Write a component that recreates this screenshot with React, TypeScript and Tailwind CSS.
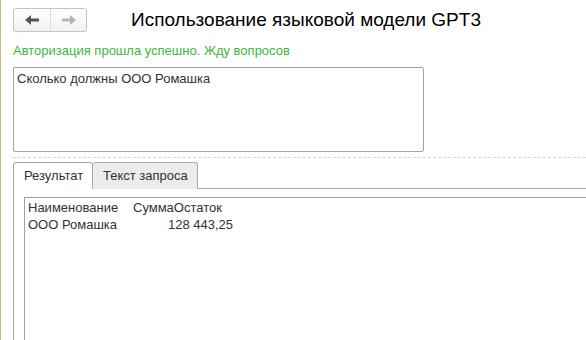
import React from 'react';

/* Arrow used in the back / forward pair */
function Arrow({ dir, color }: { dir: 'left' | 'right'; color: string }) {
  return (
    <svg width="14" height="10" viewBox="0 0 14 10" style={{ transform: dir === 'right' ? 'scaleX(-1)' : undefined }}>
      <path d="M0 5 L6 0 L6 3.5 L14 3.5 L14 6.5 L6 6.5 L6 10 Z" fill={color} />
    </svg>
  );
}

export default function App() {
  return (
    <div className="w-[586px] h-[340px] overflow-hidden bg-white border-l border-[#c8b97a] font-['Liberation_Sans',Arial,sans-serif] text-[#333]">
      <div className="pl-[12px]">
        {/* Header */}
        <div className="flex items-center pt-[8px]">
          <div className="flex h-[24px] w-[74px] rounded-[3px] border border-[#c4c4c4] bg-gradient-to-b from-white to-[#f1f1f1]">
            <div className="flex w-[37px] items-center justify-center border-r border-[#dcdcdc]">
              <Arrow dir="left" color="#555" />
            </div>
            <div className="flex flex-1 items-center justify-center">
              <Arrow dir="right" color="#b4b4b4" />
            </div>
          </div>
          <h1 className="ml-[44px] text-[19px] leading-[24px] text-black">Использование языковой модели GPT3</h1>
        </div>

        <p className="mt-[11px] text-[13px] leading-[16px] text-[#3cb83c]">Авторизация прошла успешно. Жду вопросов</p>

        {/* Query input */}
        <div className="mt-[8px] h-[85px] w-[411px] rounded-[2px] border border-[#a3a3a3] px-[3px] py-[3px] text-[13px] leading-[16px]">
          Сколько должны ООО Ромашка
        </div>

        <div className="mt-[5px] border-t border-dashed border-[#d6d6d6]" />

        {/* Tabs */}
        <div className="mt-[4px] flex h-[27px] items-end">
          <div className="flex h-[27px] w-[80px] items-center rounded-t-[3px] border border-b-0 border-[#a8a8a8] bg-white pl-[10px] text-[13px] text-[#333]">
            Результат
          </div>
          <div className="flex h-[27px] w-[105px] items-center rounded-t-[3px] border border-l-0 border-b-0 border-[#a8a8a8] bg-[#ebebeb] pl-[10px] text-[13px] text-[#333]">
            Текст запроса
          </div>
          <div className="h-[1px] flex-1 bg-[#a8a8a8]" />
        </div>

        {/* Result panel */}
        <div className="h-[200px] border-l border-[#a8a8a8] pl-[10px] pt-[8px]">
          <div className="h-[200px] border-l border-t border-[#a0a0a0] pl-[3px] pt-[1px] text-[13px] leading-[17px]">
            <div className="flex">
              <span className="w-[105px] shrink-0">Наименование</span>
              <span>СуммаОстаток</span>
            </div>
            <div className="flex">
              <span className="w-[140px] shrink-0">ООО Ромашка</span>
              <span>128 443,25</span>
            </div>
          </div>
        </div>
      </div>
    </div>
  );
}
